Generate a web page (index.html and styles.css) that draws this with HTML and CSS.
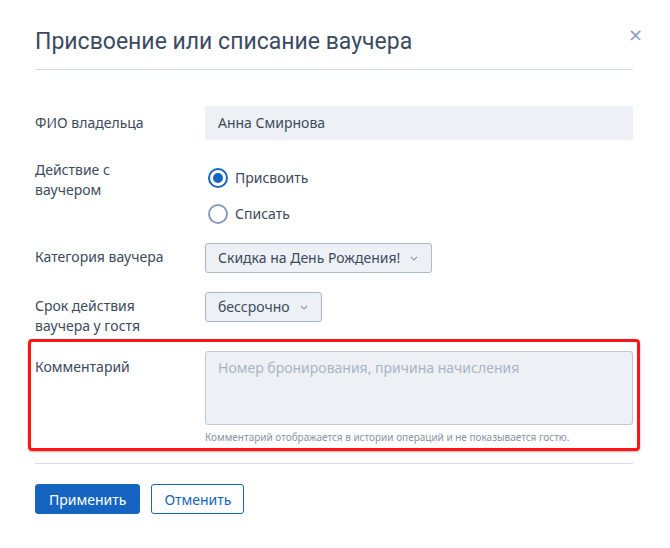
FILE: index.html
```html
<!DOCTYPE html>
<html lang="ru">
<head>
    <meta charset="UTF-8">
    <title>Присвоение или списание ваучера</title>
    <link rel="stylesheet" href="styles.css">
</head>
<body>
    <div class="modal">
        <div class="modal-header">
            <h1>Присвоение или списание ваучера</h1>
            <span class="close">&times;</span>
        </div>

        <div class="row row-name">
            <div class="label">ФИО владельца</div>
            <div class="field-static">Анна Смирнова</div>
        </div>

        <div class="row row-action">
            <div class="label">Действие с<br>ваучером</div>
            <div class="radios">
                <label class="radio checked"><span class="dot"></span>Присвоить</label>
                <label class="radio"><span class="dot"></span>Списать</label>
            </div>
        </div>

        <div class="row row-category">
            <div class="label">Категория ваучера</div>
            <div class="select">Скидка на День Рождения!
                <svg class="chev" width="8" height="5" viewBox="0 0 8 5"><path d="M1 1l3 3 3-3" fill="none" stroke="#8a9bb8" stroke-width="1.1"/></svg>
            </div>
        </div>

        <div class="row row-term">
            <div class="label">Срок действия<br>ваучера у гостя</div>
            <div class="select">бессрочно
                <svg class="chev" width="8" height="5" viewBox="0 0 8 5"><path d="M1 1l3 3 3-3" fill="none" stroke="#8a9bb8" stroke-width="1.1"/></svg>
            </div>
        </div>

        <div class="row row-comment">
            <div class="label">Комментарий</div>
            <div class="comment-field">
                <div class="textarea">Номер бронирования, причина начисления</div>
                <div class="hint">Комментарий отображается в истории операций и не показывается гостю.</div>
            </div>
        </div>

        <div class="modal-footer">
            <button class="btn btn-primary">Применить</button>
            <button class="btn btn-outline">Отменить</button>
        </div>
    </div>
</body>
</html>
```

FILE: styles.css
```css
body {
    margin: 0;
    background: #fff;
    font-family: "Noto Sans", "Open Sans", sans-serif;
    color: #3d4a5c;
}
.modal {
    padding: 0 37px 0 35px;
}
.modal-header {
    position: relative;
    height: 70px;
    border-bottom: 1px solid #d5dbe3;
    box-sizing: border-box;
}
.modal-header h1 {
    margin: 0;
    padding-top: 28px;
    font-family: Roboto, sans-serif;
    font-weight: 400;
    font-size: 23px;
    line-height: 28px;
    color: #3b4a61;
}
.close {
    position: absolute;
    right: -10px;
    top: 24px;
    font-size: 18px;
    color: #8a9bbf;
    font-family: "DejaVu Sans", sans-serif;
}
.row {
    display: flex;
    align-items: flex-start;
    font-size: 14px;
    line-height: 20px;
}
.label {
    width: 170px;
    flex-shrink: 0;
}
.row-name {
    margin-top: 36px;
    align-items: center;
}
.field-static {
    flex: 1;
    height: 34px;
    line-height: 33px;
    background: #edf0f4;
    padding: 0 13px;
}
.row-action {
    margin-top: 20px;
}
.radios {
    padding-top: 4px;
    display: flex;
    flex-direction: column;
    gap: 8px;
}
.radio {
    display: flex;
    align-items: center;
    height: 28px;
    gap: 7px;
    padding-left: 3px;
}
.radio .dot {
    width: 16px;
    height: 16px;
    border: 2px solid #8a9bb8;
    border-radius: 50%;
    position: relative;
}
.radio.checked .dot {
    border-color: #1565c0;
}
.radio.checked .dot::after {
    content: "";
    position: absolute;
    left: 3px;
    top: 3px;
    width: 10px;
    height: 10px;
    border-radius: 50%;
    background: #1565c0;
}
.row-category {
    margin-top: 15px;
}
.row-category .label,
.row-term .label {
    padding-top: 4px;
}
.row-term {
    margin-top: 19px;
}
.select {
    display: flex;
    align-items: center;
    height: 30px;
    box-sizing: border-box;
    padding: 0 13px 0 12px;
    background: #edf1f5;
    border: 1px solid #a9b8cc;
    border-radius: 3px;
}
.chev {
    margin-left: 10px;
}
.row-comment {
    position: relative;
    margin-top: 15px;
}
.row-comment::before {
    content: "";
    position: absolute;
    left: -7px;
    right: -7px;
    top: -12px;
    bottom: -7px;
    border: 3px solid #ff1515;
    border-radius: 4px;
    box-shadow: 0 1px 2px rgba(0, 0, 0, 0.3);
    pointer-events: none;
}
.row-comment .label {
    padding-top: 6px;
}
.comment-field {
    flex: 1;
}
.textarea {
    height: 74px;
    box-sizing: border-box;
    padding: 6px 12px;
    background: #edf0f4;
    border: 1px solid #bfc8d6;
    border-radius: 3px;
    color: #a9b5c6;
}
.hint {
    margin-top: 5px;
    font-size: 10px;
    line-height: 14px;
    color: #8a94a3;
}
.modal-footer {
    margin-top: 19px;
    border-top: 1px solid #d5dbe3;
    padding-top: 20px;
    display: flex;
    gap: 11px;
}
.btn {
    height: 30px;
    padding: 0 13px;
    font-family: "Noto Sans", sans-serif;
    font-size: 14px;
    border-radius: 3px;
    cursor: pointer;
}
.btn-primary {
    background: #1565c0;
    border: 1px solid #1565c0;
    color: #fff;
}
.btn-outline {
    background: #fff;
    border: 1px solid #1565c0;
    color: #1565c0;
    padding: 0 12px;
}
```
